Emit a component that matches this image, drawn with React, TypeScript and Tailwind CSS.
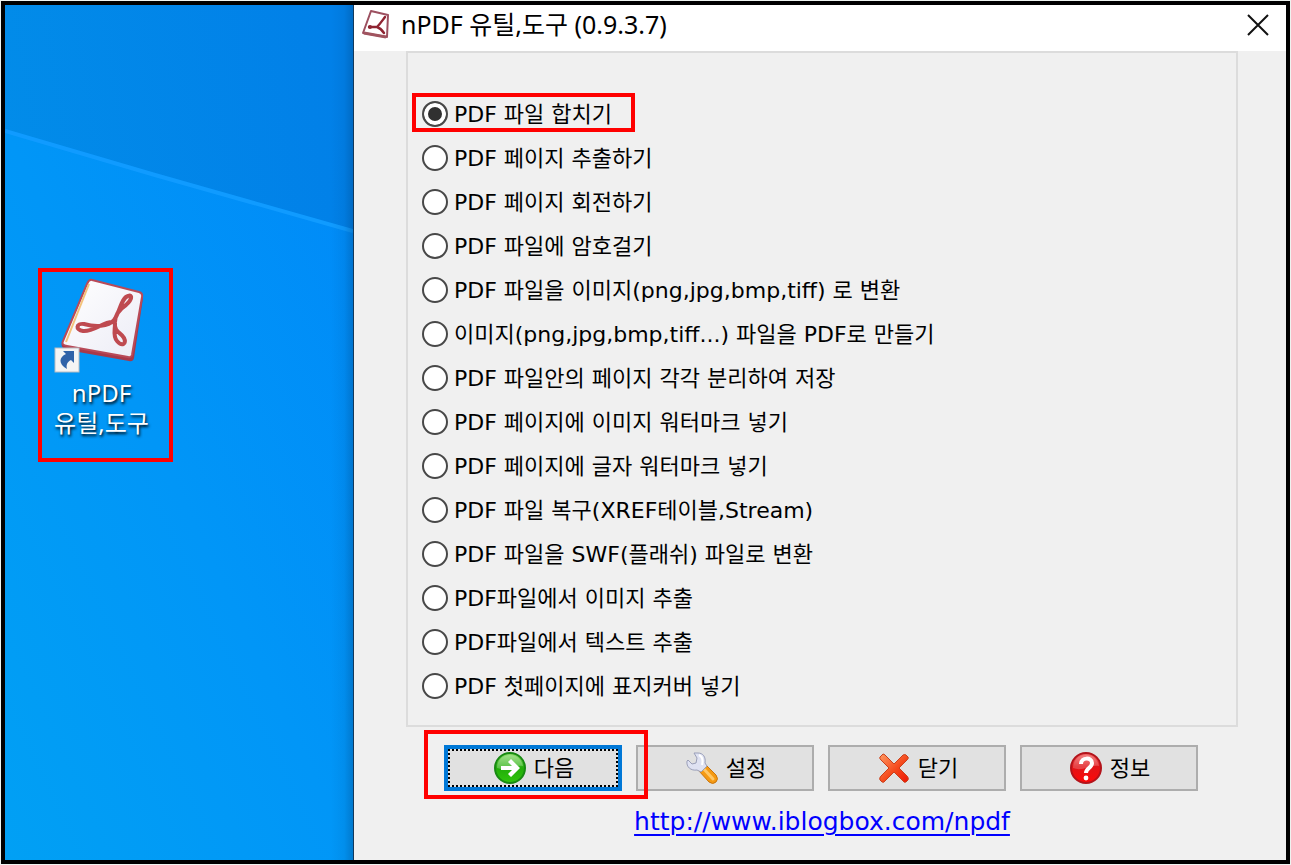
import { useState, type ReactNode } from 'react'

const TASKS = [
  'PDF 파일 합치기',
  'PDF 페이지 추출하기',
  'PDF 페이지 회전하기',
  'PDF 파일에 암호걸기',
  'PDF 파일을 이미지(png,jpg,bmp,tiff) 로 변환',
  '이미지(png,jpg,bmp,tiff...) 파일을 PDF로 만들기',
  'PDF 파일안의 페이지 각각 분리하여 저장',
  'PDF 페이지에 이미지 워터마크 넣기',
  'PDF 페이지에 글자 워터마크 넣기',
  'PDF 파일 복구(XREF테이블,Stream)',
  'PDF 파일을 SWF(플래쉬) 파일로 변환',
  'PDF파일에서 이미지 추출',
  'PDF파일에서 텍스트 추출',
  'PDF 첫페이지에 표지커버 넣기',
]

function Wallpaper() {
  return (
    <svg
      className="absolute inset-0 h-full w-full"
      viewBox="0 0 348 855"
      preserveAspectRatio="none"
      aria-hidden="true"
    >
      <defs>
        <linearGradient id="sky" x1="0" y1="0.6" x2="1" y2="0.2">
          <stop offset="0" stopColor="#028ee9" />
          <stop offset="1" stopColor="#0180e8" />
        </linearGradient>
        <linearGradient id="beam" x1="0" y1="1" x2="1" y2="0">
          <stop offset="0" stopColor="#01a0f4" />
          <stop offset="0.5" stopColor="#0196f7" />
          <stop offset="1" stopColor="#008af8" />
        </linearGradient>
        <linearGradient id="edge" x1="0" y1="0" x2="1" y2="0">
          <stop offset="0" stopColor="#00396e" stopOpacity="0" />
          <stop offset="0.6" stopColor="#00396e" stopOpacity="0.08" />
          <stop offset="1" stopColor="#00396e" stopOpacity="0.3" />
        </linearGradient>
      </defs>
      <rect width="348" height="855" fill="url(#sky)" />
      <path d="M0 126L150 170L348 226V855H0Z" fill="url(#beam)" />
      <path d="M0 126L150 170L348 226" fill="none" stroke="#109bff" strokeWidth="4" />
      <rect x="326" width="22" height="855" fill="url(#edge)" />
    </svg>
  )
}

function ShortcutIcon() {
  return (
    <svg className="h-[96px] w-[92px]" viewBox="0 0 92 96" aria-hidden="true">
      <defs>
        <linearGradient id="paper" x1="0" y1="0" x2="1" y2="1">
          <stop offset="0" stopColor="#ffffff" />
          <stop offset="1" stopColor="#ececf6" />
        </linearGradient>
      </defs>
      <path d="M39 4L86 16Q89 17 89 20L80 80Q79 84 75 83L13 72Q6 70 8 64L33 8Q35 3 39 4Z" fill="#a8394a" />
      <path d="M38 2L85 14Q89 15 88 19L78 77Q77 80 74 79L13 68Q7 67 9 63L33 6Q35 1 38 2Z" fill="url(#paper)" stroke="#b94a58" strokeWidth="2" />
      <path d="M35 6L12 64" stroke="#f4c27a" strokeWidth="2" />
      <path
        d="M61 44C61 36 66 31 72 27C78 22 79 16 74 18C67 20 66 34 60 42C54 49 41 49 30 46C22 45 21 52 29 53C40 54 50 43 59 44C64 45 57 56 63 63C68 69 73 66 70 60C67 54 60 55 61 44"
        fill="none"
        stroke="#bf4a50"
        strokeWidth="4"
        strokeLinejoin="round"
      />
      <rect x="1" y="70" width="24" height="24" fill="#f4f4f4" stroke="#b8bcc2" strokeWidth="1" />
      <path d="M9 73H20V85L17 82C13 84 12 87 13 91C4 86 5 79 12 76Z" fill="#2f62a8" />
    </svg>
  )
}

function TitleIcon() {
  return (
    <svg className="h-[30px] w-[30px] shrink-0" viewBox="0 0 30 30" aria-hidden="true">
      <path d="M10 2L27 6L26 28L2 24Z" fill="#fff" stroke="#9c5060" strokeWidth="2" strokeLinejoin="round" />
      <path d="M3 24L25 28" stroke="#a0545f" strokeWidth="3" />
      <path
        d="M24 8C21 12 19 15 16 18H8M16 18C19 19 21 21 23 24"
        fill="none"
        stroke="#8f2432"
        strokeWidth="2.4"
        strokeLinecap="round"
      />
      <circle cx="9" cy="18" r="2" fill="#8f2432" />
    </svg>
  )
}

function NextIcon() {
  return (
    <svg className="h-8 w-8" viewBox="0 0 32 32" aria-hidden="true">
      <defs>
        <linearGradient id="green" x1="0" y1="0" x2="0" y2="1">
          <stop offset="0" stopColor="#8ede6c" />
          <stop offset="0.5" stopColor="#22ac0a" />
          <stop offset="1" stopColor="#2fc50c" />
        </linearGradient>
      </defs>
      <circle cx="16" cy="16" r="15" fill="url(#green)" stroke="#188a12" strokeWidth="2" />
      <path d="M3 16C3 9 8 3 16 3C23 3 28 8 29 14C20 12 13 20 3 16Z" fill="#fff" opacity="0.25" />
      <path d="M7 14H18L14 10L17 7L26 16L17 25L14 22L18 18H7Z" fill="#fff" />
    </svg>
  )
}

function WrenchIcon() {
  return (
    <svg className="h-8 w-8" viewBox="0 0 32 32" aria-hidden="true">
      <path d="M13 14L18 11L30 23Q33 27 30 30Q27 33 23 30L13 19Z" fill="#f59a13" stroke="#c9750d" strokeWidth="1" />
      <path d="M17 16L27 27" stroke="#ffc766" strokeWidth="3" strokeLinecap="round" />
      <path
        d="M8 1L12 1C17 1 20 5 19 11L21 14L15 20L11 18C5 19 0 15 1 9L2 8L6 12L10 11L11 6Z"
        fill="#dfe2f2"
        stroke="#9a9fb8"
        strokeWidth="1"
        strokeLinejoin="round"
      />
      <path d="M13 3C17 5 17 9 16 13" fill="none" stroke="#fff" strokeWidth="2" />
    </svg>
  )
}

function CloseIcon() {
  return (
    <svg className="h-8 w-8" viewBox="0 0 32 32" aria-hidden="true">
      <defs>
        <linearGradient id="orange" x1="0" y1="0" x2="1" y2="1">
          <stop offset="0" stopColor="#ff9a63" />
          <stop offset="0.55" stopColor="#f5491c" />
          <stop offset="1" stopColor="#ee1504" />
        </linearGradient>
      </defs>
      <path
        d="M5 2Q6 2 7 3L16 12L25 3Q27 2 28 3L30 5Q31 6 29 8L21 16L29 24Q31 26 30 28L28 30Q26 31 25 29L16 20L7 29Q6 31 4 30L2 28Q1 26 3 24L11 16L3 8Q1 6 2 5Z"
        fill="url(#orange)"
        stroke="#c9401c"
        strokeWidth="1"
        strokeLinejoin="round"
      />
    </svg>
  )
}

function HelpIcon() {
  return (
    <svg className="h-8 w-8" viewBox="0 0 32 32" aria-hidden="true">
      <defs>
        <linearGradient id="red" x1="0" y1="0" x2="0" y2="1">
          <stop offset="0" stopColor="#f47070" />
          <stop offset="0.45" stopColor="#e01418" />
          <stop offset="1" stopColor="#ff0808" />
        </linearGradient>
      </defs>
      <circle cx="16" cy="16" r="15" fill="url(#red)" stroke="#b3131a" strokeWidth="2" />
      <path d="M3 16C3 9 8 3 16 3C23 3 28 8 29 14C20 12 13 20 3 16Z" fill="#fff" opacity="0.2" />
      <path d="M11 12C11 5 22 5 22 11C22 16 16 16 16 21" fill="none" stroke="#fff" strokeWidth="4" />
      <circle cx="16" cy="26" r="2.4" fill="#fff" />
    </svg>
  )
}

// red rectangle drawn over the thing to click
function Marker({ className }: { className: string }) {
  return (
    <span
      className={`pointer-events-none absolute z-10 border-4 border-[#ff0000] ${className}`}
    />
  )
}

function ToolButton({
  icon,
  label,
  focused = false,
}: {
  icon: ReactNode
  label: string
  focused?: boolean
}) {
  return (
    <button
      type="button"
      className={
        focused
          ? 'h-[46px] w-full border-4 border-[#0078d7] bg-[#e1e1e1]'
          : 'h-[46px] w-full border-2 border-[#adadad] bg-[#e1e1e1]'
      }
    >
      <span
        className={
          focused
            ? 'flex h-full items-center justify-center gap-2 border-2 border-dotted border-black pl-[2px]'
            : 'flex h-full items-center justify-center gap-2 pl-[2px]'
        }
      >
        {icon}
        <span className="pt-[2px]">{label}</span>
      </span>
    </button>
  )
}

function Desktop() {
  return (
    <aside className="relative w-[349px] shrink-0 border-r border-[#12395c]">
      <Wallpaper />
      <div className="relative ml-[33px] mt-[263px] flex h-[194px] w-[135px] flex-col items-center border-4 border-[#ff0000] pr-2 pt-[6px] font-['Noto_Sans','Noto_Sans_CJK_KR',sans-serif]">
        <div className="pr-1">
          <ShortcutIcon />
        </div>
        <div className="mt-1 whitespace-nowrap text-center text-[24px] leading-[30px] text-white [text-shadow:1px_2px_3px_#000]">
          nPDF
          <br />
          유틸,도구
        </div>
      </div>
    </aside>
  )
}

export default function App() {
  const [task, setTask] = useState(0)

  return (
    <div className="flex min-h-screen bg-[#eef3f0] p-px">
      <div className="flex flex-1 border-4 border-black">
        <Desktop />
        <main className="flex min-w-0 flex-1 flex-col bg-[#f0f0f0] font-['DejaVu_Sans','Noto_Sans_CJK_KR',sans-serif] text-[22px] leading-7 text-black">
          <header className="flex h-[46px] items-center bg-white pb-[9px] pl-[7px] pr-4">
            <TitleIcon />
            <h1 className="ml-[10px] flex-1 font-['Noto_Sans','Noto_Sans_CJK_KR',sans-serif] text-[25px] leading-[30px]">
              nPDF 유틸,도구 (0.9.3.7)
            </h1>
            <button type="button" aria-label="Close">
              <svg className="h-6 w-6" viewBox="0 0 24 24" aria-hidden="true">
                <path d="M2 3L22 23M22 3L2 23" stroke="#111" strokeWidth="2" />
              </svg>
            </button>
          </header>

          <div className="pl-[52px] pr-12">
            <fieldset className="border-2 border-[#dcdcdc] pb-[17px] pl-[14px] pt-[39px]">
              {TASKS.map((name, i) => (
                <div key={name} className="flex h-11 items-center">
                  <label className="relative flex items-center gap-[6px] whitespace-nowrap">
                    <input
                      type="radio"
                      name="task"
                      checked={task === i}
                      onChange={() => setTask(i)}
                      className="h-[26px] w-[26px] shrink-0 appearance-none rounded-full border-2 border-[#484848] bg-white checked:bg-[#303030] checked:shadow-[inset_0_0_0_4px_#fff]"
                    />
                    <span className="pt-[2px]">{name}</span>
                    {i === 0 && <Marker className="-left-[10px] -right-[23px] -top-[6px] h-[39px]" />}
                  </label>
                </div>
              ))}
            </fieldset>

            <div className="mt-[18px] grid grid-cols-4 gap-[14px] pl-[38px] pr-10">
              <div className="relative">
                <ToolButton icon={<NextIcon />} label="다음" focused />
                <Marker className="-left-5 -right-[26px] -top-[15px] h-[69px]" />
              </div>
              <ToolButton icon={<WrenchIcon />} label="설정" />
              <ToolButton icon={<CloseIcon />} label="닫기" />
              <ToolButton icon={<HelpIcon />} label="정보" />
            </div>

            <div className="mt-4 text-center text-[25px] leading-[30px]">
              <a
                href="http://www.iblogbox.com/npdf"
                className="text-[#0000ff] underline decoration-2 underline-offset-4"
              >
                http://www.iblogbox.com/npdf
              </a>
            </div>
          </div>
        </main>
      </div>
    </div>
  )
}
